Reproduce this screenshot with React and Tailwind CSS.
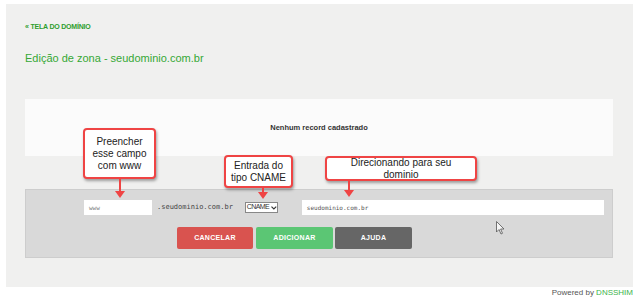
import React from "react";

function Callout({ className, arrowLeft, arrowLen, children }) {
  return (
    <div className={"absolute " + className}>
      <div className="h-full w-full rounded-[4px] border-2 border-[#ef4444] bg-white shadow-[1px_2px_3px_rgba(0,0,0,0.35)] flex flex-col items-center justify-center text-center text-[10px] leading-[12px] text-[#222]" style={{ fontFamily: '"Liberation Sans", Arial, sans-serif' }}>
        {children}
      </div>
      <svg className="absolute" style={{ left: arrowLeft - 5, top: "100%" }} width="10" height={arrowLen} viewBox={`0 0 10 ${arrowLen}`}>
        <rect x="4" y="0" width="2" height={arrowLen - 5} fill="#ef4444" />
        <polygon points={`0,${arrowLen - 7} 10,${arrowLen - 7} 5,${arrowLen}`} fill="#ef4444" />
      </svg>
    </div>
  );
}

export default function App() {
  const sans = { fontFamily: '"Liberation Sans", Arial, sans-serif' };
  const mono = { fontFamily: '"DejaVu Sans Mono", "Liberation Mono", monospace' };
  return (
    <div className="relative w-[640px] h-[308px] bg-white overflow-hidden" style={sans}>
      <div className="ml-[6px] mt-[4px] w-[627px] h-[283px] bg-[#f0f0ef] pl-[19px] pr-[20px] pt-[19px]">
        <div className="h-[8px] flex items-center text-[7px] font-bold text-[#2e9e2e] tracking-[-0.2px]">
          « TELA DO DOMÍNIO
        </div>
        <div className="mt-[19px] h-[16px] flex items-center text-[11px] text-[#35a835]">
          Edição de zona - seudominio.com.br
        </div>
        <div className="mt-[33px] h-[57px] bg-[#fbfbfb] flex items-center justify-center text-[7.5px] font-bold text-[#333]">
          Nenhum record cadastrado
        </div>
        <div className="mt-[33px] h-[69px] bg-[#d9d9d9] border border-[#cdcdcd] pt-[10px]">
          <div className="flex items-center h-[15px]">
            <div className="ml-[58px] w-[68px] h-[15px] bg-white flex items-center pl-[5px] text-[6px] text-[#777]" style={mono}>www</div>
            <div className="ml-[5px] text-[7px] text-[#444]" style={mono}>.seudominio.com.br</div>
            <div className="ml-[12px] w-[33px] h-[11px] bg-white border border-[#888] flex items-center pl-[1px] text-[7px] text-[#333] tracking-[-0.6px]">
              CNAME
              <svg className="ml-[2px]" width="6" height="4" viewBox="0 0 6 4"><path d="M0.5 0.5 L3 3 L5.5 0.5" fill="none" stroke="#333" strokeWidth="1.2" /></svg>
            </div>
            <div className="ml-[24px] w-[302px] h-[15px] bg-white flex items-center pl-[5px] text-[6px] text-[#555]" style={mono}>seudominio.com.br</div>
          </div>
          <div className="mt-[12px] flex h-[22px]">
            <div className="ml-[151px] w-[76px] h-[22px] rounded-[2px] bg-[#d9534f] flex items-center justify-center text-[7px] font-bold text-white tracking-[0.3px]">CANCELAR</div>
            <div className="ml-[3px] w-[77px] h-[22px] rounded-[2px] bg-[#5bc674] flex items-center justify-center text-[7px] font-bold text-white tracking-[0.3px]">ADICIONAR</div>
            <div className="ml-[2px] w-[77px] h-[22px] rounded-[2px] bg-[#666666] flex items-center justify-center text-[7px] font-bold text-white tracking-[0.3px]">AJUDA</div>
          </div>
        </div>
      </div>
      <div className="flex justify-end items-center h-[12px] pr-[7px] text-[8px] text-[#555]">
        Powered by&nbsp;<span className="text-[#3cb44b]">DNSSHIM</span>
      </div>

      <Callout className="left-[83px] top-[128px] w-[73px] h-[51px]" arrowLeft={37} arrowLen={19}>
        <span>Preencher</span>
        <span>esse campo</span>
        <span>com www</span>
      </Callout>
      <Callout className="left-[224px] top-[155px] w-[69px] h-[33px]" arrowLeft={39} arrowLen={11}>
        <span>Entrada do</span>
        <span>tipo CNAME</span>
      </Callout>
      <Callout className="left-[325px] top-[156px] w-[152px] h-[25px]" arrowLeft={24} arrowLen={16}>
        <span>Direcionando para seu</span>
        <span>dominio</span>
      </Callout>

      <svg className="absolute left-[496px] top-[221px]" width="9" height="14" viewBox="0 0 9 14">
        <path d="M0.5 0.5 L0.5 11 L3 8.5 L5 13 L6.5 12.3 L4.6 8 L8 8 Z" fill="#f5f5f5" stroke="#555" strokeWidth="0.8" />
      </svg>
    </div>
  );
}
